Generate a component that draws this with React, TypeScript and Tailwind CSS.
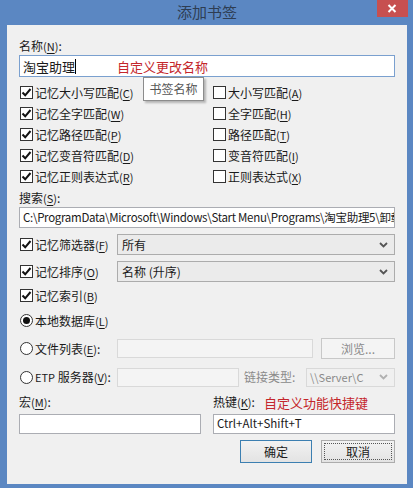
import React from "react";

const F = { fontFamily: '"Noto Sans CJK SC", "Noto Sans", sans-serif' };

function Acc({ k }: { k: string }) {
  return (
    <span className="text-[11px]">
      (<span className="underline underline-offset-[2px]">{k}</span>)
    </span>
  );
}

function Check({ on }: { on?: boolean }) {
  return (
    <span className="w-[13px] h-[13px] border border-[#333] bg-white flex items-center justify-center shrink-0">
      {on && (
        <svg width="11" height="11" viewBox="0 0 11 11">
          <path d="M1.5 5.5 L4.2 8.3 L9.5 2" fill="none" stroke="#111" strokeWidth="2" />
        </svg>
      )}
    </span>
  );
}

function Radio({ on }: { on?: boolean }) {
  return (
    <span className="w-[13px] h-[13px] rounded-full border border-[#333] bg-white flex items-center justify-center shrink-0">
      {on && <span className="w-[7px] h-[7px] rounded-full bg-[#111]" />}
    </span>
  );
}

function CheckRow({ on, text, k }: { on?: boolean; text: string; k: string }) {
  return (
    <div className="h-[21px] flex items-center gap-[2px] whitespace-nowrap">
      <Check on={on} />
      <span>
        {text}
        <Acc k={k} />
      </span>
    </div>
  );
}

function Chevron({ color }: { color: string }) {
  return (
    <svg width="9" height="6" viewBox="0 0 9 6">
      <path d="M1 1 L4.5 4.5 L8 1" fill="none" stroke={color} strokeWidth="1.8" />
    </svg>
  );
}

export default function App() {
  return (
    <div
      className="w-[413px] h-[488px] bg-[#5b87c2] flex flex-col text-[12px] text-[#1a1a1a] leading-none overflow-hidden"
      style={F}
    >
      {/* title bar */}
      <div className="h-[25px] flex items-start justify-between">
        <div className="w-[37px]" />
        <div className="pt-[4px] text-[15px] text-[#2e3d52]">添加书签</div>
        <div className="w-[31px] h-[17px] mr-[5px] bg-[#c75050] flex items-center justify-center">
          <svg width="10" height="9" viewBox="0 0 10 9">
            <path d="M1.5 1 L8.5 8 M8.5 1 L1.5 8" stroke="#fff" strokeWidth="2" />
          </svg>
        </div>
      </div>

      {/* client area */}
      <div className="ml-[7px] mr-[6px] mb-[4px] flex-1 bg-[#f0f0f0] px-[12px] flex flex-col relative whitespace-nowrap">
        <div className="mt-[14px] h-[14px] flex items-center">
          名称<Acc k="N" />:
        </div>
        <div className="mt-[2px] h-[22px] border border-[#7aa0cf] bg-white flex items-center pl-[3px]">
          <span className="text-[13px]">淘宝助理</span>
          <span className="w-[1px] h-[15px] bg-black" />
          <span className="ml-[41px] text-[13px] text-[#c4262b]">自定义更改名称</span>
        </div>

        <div className="mt-[5px] grid grid-cols-[194px_1fr]">
          <div className="flex flex-col pl-[1px]">
            <CheckRow on text="记忆大小写匹配" k="C" />
            <CheckRow on text="记忆全字匹配" k="W" />
            <CheckRow on text="记忆路径匹配" k="P" />
            <CheckRow on text="记忆变音符匹配" k="D" />
            <CheckRow on text="记忆正则表达式" k="R" />
          </div>
          <div className="flex flex-col">
            <CheckRow text="大小写匹配" k="A" />
            <CheckRow text="全字匹配" k="H" />
            <CheckRow text="路径匹配" k="T" />
            <CheckRow text="变音符匹配" k="I" />
            <CheckRow text="正则表达式" k="X" />
          </div>
        </div>

        {/* tooltip */}
        <div className="absolute left-[136px] top-[52px] w-[61px] h-[24px] bg-white border border-[#8c8c8c] shadow-[2px_2px_2px_rgba(0,0,0,0.25)] flex items-center justify-center text-[#555]">
          书签名称
        </div>

        <div className="mt-[4px] h-[14px] flex items-center">
          搜索<Acc k="S" />:
        </div>
        <div className="mt-[2px] h-[21px] border border-[#abadb3] bg-white flex items-center pl-[3px] overflow-hidden text-[11.5px] tracking-[-0.3px]">
          C:\ProgramData\Microsoft\Windows\Start Menu\Programs\淘宝助理5\卸载淘宝助理
        </div>

        <div className="mt-[6px] h-[21px] flex items-center">
          <div className="w-[98px] flex items-center gap-[2px] pl-[1px]">
            <Check on />
            <span>
              记忆筛选器<Acc k="F" />
            </span>
          </div>
          <div className="flex-1 h-[21px] border border-[#acacac] bg-[#ebebeb] flex items-center justify-between pl-[4px] pr-[6px]">
            <span>所有</span>
            <Chevron color="#555" />
          </div>
        </div>

        <div className="mt-[6px] h-[21px] flex items-center">
          <div className="w-[98px] flex items-center gap-[2px] pl-[1px]">
            <Check on />
            <span>
              记忆排序<Acc k="O" />
            </span>
          </div>
          <div className="flex-1 h-[21px] border border-[#acacac] bg-[#ebebeb] flex items-center justify-between pl-[4px] pr-[6px]">
            <span>名称 (升序)</span>
            <Chevron color="#555" />
          </div>
        </div>

        <div className="mt-[3px] h-[21px] flex items-center gap-[2px] pl-[1px]">
          <Check on />
          <span>
            记忆索引<Acc k="B" />
          </span>
        </div>

        <div className="mt-[4px] h-[21px] flex items-center gap-[2px] pl-[1px]">
          <Radio on />
          <span>
            本地数据库<Acc k="L" />
          </span>
        </div>

        <div className="mt-[7px] h-[21px] flex items-center">
          <div className="w-[98px] flex items-center gap-[2px] pl-[1px]">
            <Radio />
            <span>
              文件列表<Acc k="E" />:
            </span>
          </div>
          <div className="w-[196px] h-[19px] border border-[#d9d9d9] bg-[#f4f4f4]" />
          <div className="ml-[8px] w-[74px] h-[21px] border border-[#c8c8c8] bg-[#f4f4f4] flex items-center justify-center text-[#8a8a8a]">
            浏览...
          </div>
        </div>

        <div className="mt-[8px] h-[20px] flex items-center">
          <div className="w-[98px] flex items-center gap-[2px] pl-[1px]">
            <Radio />
            <span>
              <span className="text-[11px]">ETP</span> 服务器<Acc k="V" />:
            </span>
          </div>
          <div className="w-[122px] h-[19px] border border-[#d9d9d9] bg-[#f4f4f4]" />
          <div className="ml-[5px] w-[59px] text-[#8a8a8a]">链接类型:</div>
          <div className="ml-[3px] flex-1 h-[19px] border border-[#d9d9d9] bg-[#f0f0f0] flex items-center justify-between pl-[3px] pr-[6px] text-[#8a8a8a]">
            <span className="text-[11px]">\\Server\C</span>
            <Chevron color="#b0b0b0" />
          </div>
        </div>

        <div className="mt-[8px] grid grid-cols-[182px_1fr] gap-x-[12px]">
          <div className="flex flex-col">
            <div className="h-[14px] flex items-center">
              宏<Acc k="M" />:
            </div>
            <div className="mt-[5px] h-[20px] border border-[#abadb3] bg-white" />
          </div>
          <div className="flex flex-col">
            <div className="h-[14px] flex items-center">
              热键<Acc k="K" />:
              <span className="ml-[9px] text-[13px] text-[#c4262b]">自定义功能快捷键</span>
            </div>
            <div className="mt-[5px] h-[20px] border border-[#abadb3] bg-white flex items-center pl-[3px] text-[11.5px]">
              Ctrl+Alt+Shift+T
            </div>
          </div>
        </div>

        <div className="mt-[6px] flex justify-end gap-[9px]">
          <div className="w-[72px] h-[23px] border border-[#3c7fb1] bg-gradient-to-b from-[#f2f2f2] to-[#e3e3e3] flex items-center justify-center">
            确定
          </div>
          <div className="w-[74px] h-[23px] border border-[#acacac] bg-gradient-to-b from-[#f2f2f2] to-[#e3e3e3] p-[2px]">
            <div className="w-full h-full border border-dotted border-[#555] flex items-center justify-center">
              取消
            </div>
          </div>
        </div>
      </div>
    </div>
  );
}
